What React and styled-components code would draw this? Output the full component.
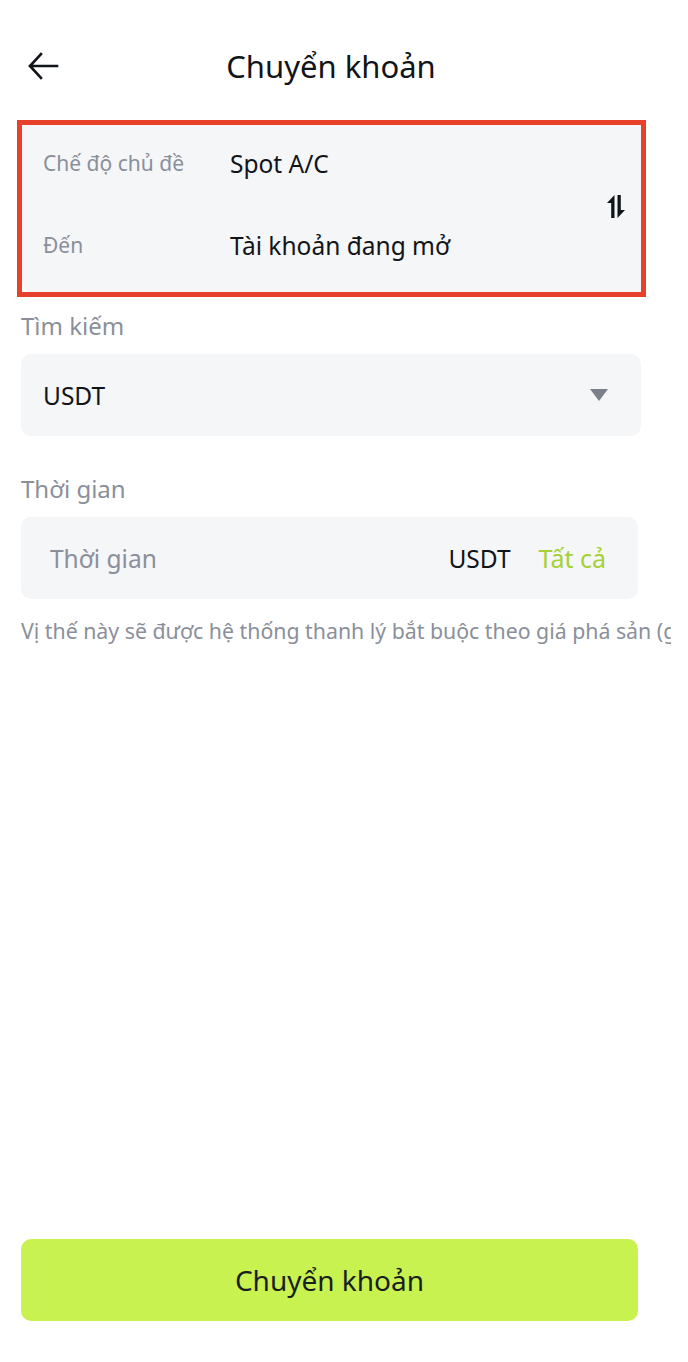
import React from 'react'
import styled, { createGlobalStyle } from 'styled-components'

const GlobalStyle = createGlobalStyle`
    html, body {
        margin: 0;
        padding: 0;
        background: #ffffff;
    }
    body {
        font-family: "Noto Sans", Roboto, sans-serif;
        color: #111418;
    }
`

const Page = styled.div`
    width: 688px;
    min-height: 1362px;
    box-sizing: border-box;
    display: flex;
    flex-direction: column;
    padding: 0 47px 41px 21px;
    overflow: hidden;
`

const Header = styled.div`
    height: 120px;
    display: grid;
    grid-template-columns: 48px 1fr 48px;
    align-items: center;
    padding-top: 12px;
    box-sizing: border-box;
`

const BackButton = styled.button`
    border: none;
    background: none;
    padding: 0;
    width: 40px;
    height: 40px;
    display: flex;
    align-items: center;
    justify-content: flex-start;
    margin-left: 6px;
    cursor: pointer;
`

const Title = styled.h1`
    margin: 0;
    text-align: center;
    font-size: 31px;
    font-weight: 400;
    color: #111418;
`

const Highlight = styled.div`
    margin-left: -4px;
    margin-right: -5px;
    border: 5px solid #e8412b;
`

const AccountPanel = styled.div`
    background: #f5f6f8;
    border-radius: 0 0 0 10px;
    display: flex;
    align-items: center;
    padding: 13px 15px 22px 21px;
`

const AccountRows = styled.div`
    flex: 1;
    display: grid;
    row-gap: 32px;
`

const AccountRow = styled.div`
    display: grid;
    grid-template-columns: 187px 1fr;
    align-items: center;
    height: 50px;
`

const RowLabel = styled.span`
    font-size: 21px;
    color: #8a8f9a;
`

const RowValue = styled.span`
    font-size: 24.5px;
    color: #111418;
`

const SwapIcon = styled.svg`
    width: 20px;
    height: 25px;
    margin-top: 4px;
`

const FieldLabel = styled.div`
    font-size: 24px;
    line-height: 30px;
    color: #8a8f9a;
    margin-top: ${p => p.$top}px;
    margin-bottom: 13px;
`

const Field = styled.div`
    height: 82px;
    box-sizing: border-box;
    border-radius: 10px;
    background: #f5f6f8;
    display: flex;
    align-items: center;
    padding: 0 ${p => p.$right}px 0 ${p => p.$left}px;
    margin-right: ${p => p.$trim}px;
    gap: 28px;
`

const FieldText = styled.span`
    font-size: 24.5px;
    color: ${p => p.$muted ? '#8a8f9a' : '#111418'};
    flex: ${p => p.$grow ? 1 : 'none'};
`

const AllLink = styled.span`
    font-size: 25px;
    color: #a4d133;
`

const Caret = styled.svg`
    width: 18px;
    height: 12px;
`

const Note = styled.div`
    margin-top: 19px;
    width: 650px;
    overflow: hidden;
    white-space: nowrap;
    font-size: 21.3px;
    line-height: 26px;
    color: #8a8f9a;
`

const SubmitButton = styled.button`
    margin-top: auto;
    height: 82px;
    margin-right: 3px;
    border: none;
    border-radius: 10px;
    background: #c8f250;
    font-family: "Noto Sans", Roboto, sans-serif;
    font-size: 28px;
    color: #1a1d21;
    cursor: pointer;
`

export default function App() {
    return (
        <Page>
            <GlobalStyle />
            <Header>
                <BackButton aria-label="back">
                    <svg width="32" height="30" viewBox="0 0 32 30" fill="none">
                        <path d="M30 15H3M14 3L3 15l11 12" stroke="#111418" strokeWidth="2.6" strokeLinecap="square" />
                    </svg>
                </BackButton>
                <Title>Chuyển khoản</Title>
                <span />
            </Header>

            <Highlight>
                <AccountPanel>
                    <AccountRows>
                        <AccountRow>
                            <RowLabel>Chế độ chủ đề</RowLabel>
                            <RowValue>Spot A/C</RowValue>
                        </AccountRow>
                        <AccountRow>
                            <RowLabel>Đến</RowLabel>
                            <RowValue>Tài khoản đang mở</RowValue>
                        </AccountRow>
                    </AccountRows>
                    <SwapIcon viewBox="0 0 20 25">
                        <path d="M1 9 L8.5 1 L8.5 24 L5.2 24 L5.2 9 Z" fill="#111418" />
                        <path d="M11.5 1 L14.8 1 L14.8 16 L19 16 L11.5 24 Z" fill="#111418" />
                    </SwapIcon>
                </AccountPanel>
            </Highlight>

            <FieldLabel $top={14}>Tìm kiếm</FieldLabel>
            <Field $left={22} $right={33} $trim={0}>
                <FieldText $grow>USDT</FieldText>
                <Caret viewBox="0 0 18 12">
                    <path d="M0 0H18L9 12Z" fill="#7b808a" />
                </Caret>
            </Field>

            <FieldLabel $top={38}>Thời gian</FieldLabel>
            <Field $left={29} $right={32} $trim={3}>
                <FieldText $muted $grow>Thời gian</FieldText>
                <FieldText>USDT</FieldText>
                <AllLink>Tất cả</AllLink>
            </Field>

            <Note>Vị thế này sẽ được hệ thống thanh lý bắt buộc theo giá phá sản (giá thanh lý) khi tỷ lệ ký quỹ giảm xuống</Note>

            <SubmitButton>Chuyển khoản</SubmitButton>
        </Page>
    )
}
